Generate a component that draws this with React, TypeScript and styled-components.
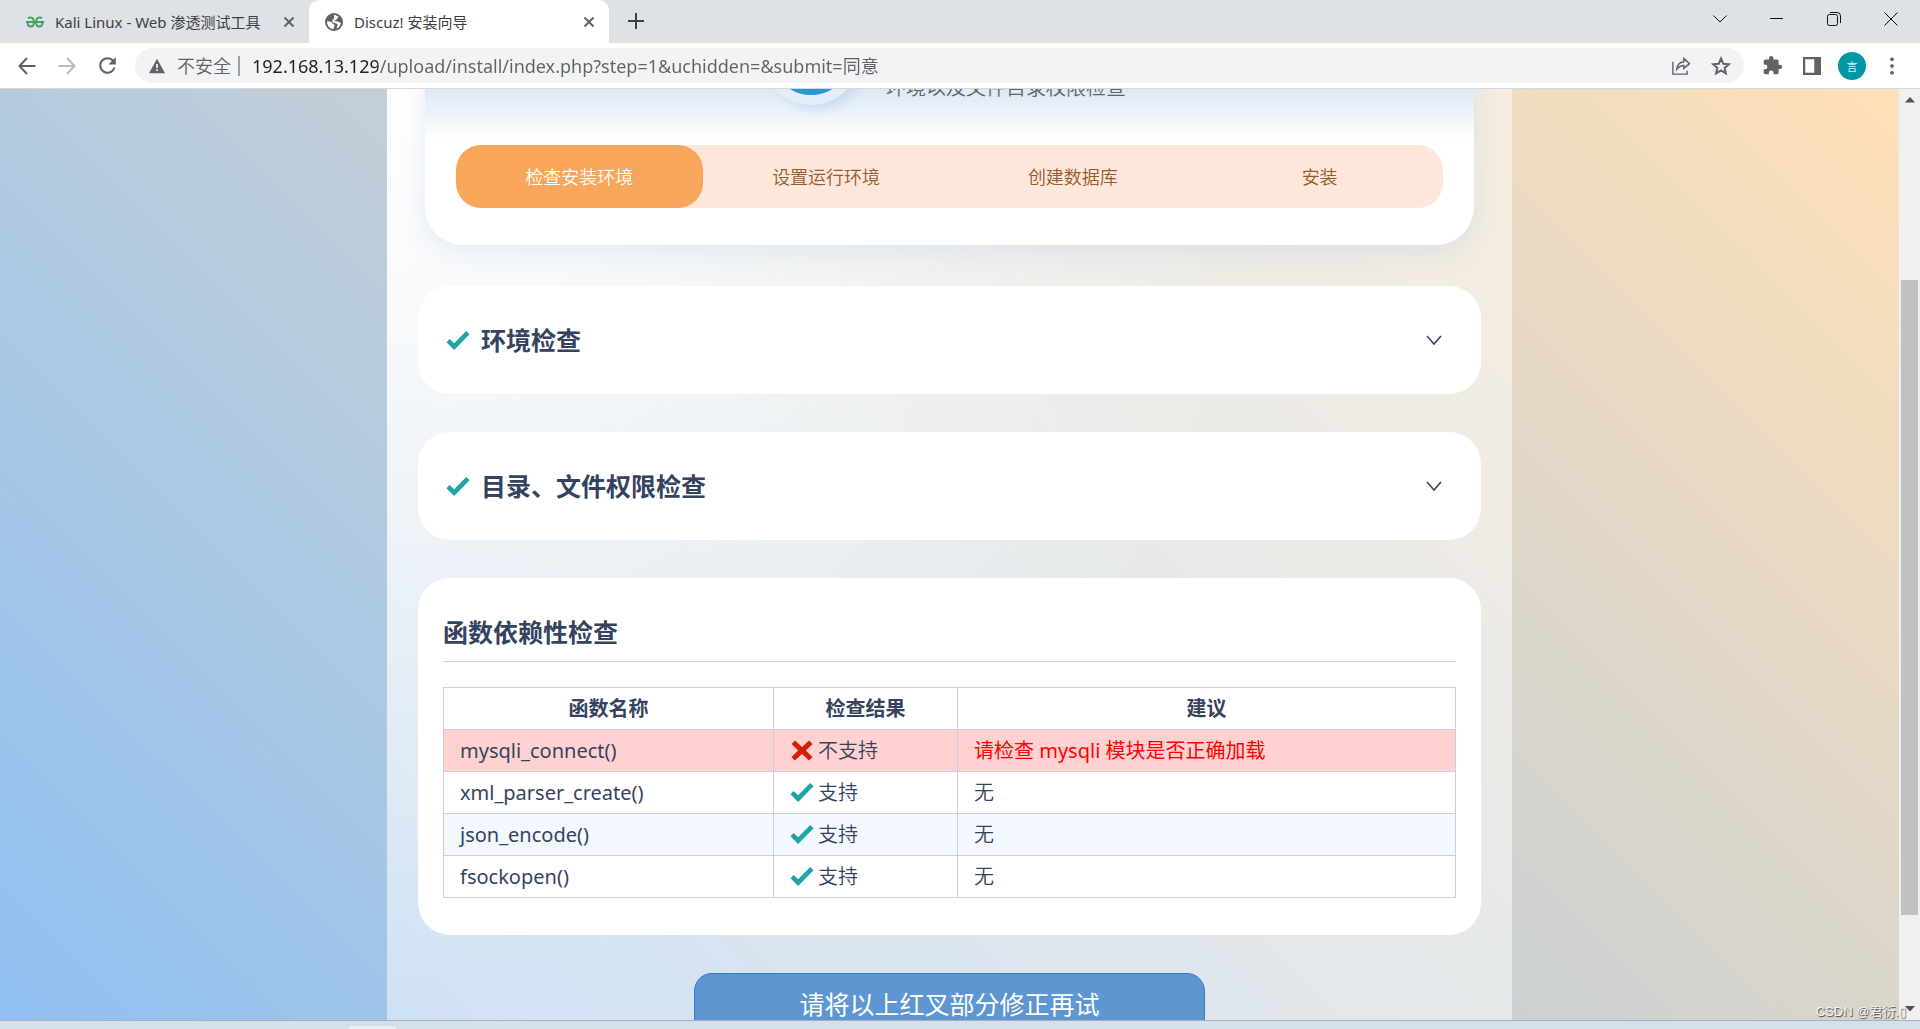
import React, { useState } from "react";
import styled, { createGlobalStyle } from "styled-components";

const GlobalStyle = createGlobalStyle`
  *, *::before, *::after { box-sizing: border-box; }
  body {
    margin: 0;
    overflow: hidden;
    font-family: "Noto Sans", "Noto Sans CJK SC", sans-serif;
    color: #35435f;
  }
  button, input { font: inherit; color: inherit; }
  button { border: 0; padding: 0; background: none; cursor: pointer; }
  svg { display: block; flex: none; }
`;

/* ---------- browser frame ---------- */

const Window = styled.div`
  display: flex;
  flex-direction: column;
  height: 100vh;
  background: #fff;
`;

const TabStrip = styled.header`
  display: flex;
  flex: none;
  height: 43px;
  background: #dee1e6;
`;

const Tab = styled.div<{ $active?: boolean }>`
  display: flex;
  align-items: center;
  gap: 11px;
  width: ${(p) => (p.$active ? 300 : 309)}px;
  padding: 0 14px 0 ${(p) => (p.$active ? 16 : 26)}px;
  background: ${(p) => (p.$active ? "#fff" : "transparent")};
  border-radius: 10px 10px 0 0;
  color: #3c4043;
`;

const TabTitle = styled.span`
  flex: 1;
  min-width: 0;
  overflow: hidden;
  white-space: nowrap;
  font-size: 15px;
  line-height: 20px;
`;

const IconButton = styled.button<{ $size?: number }>`
  display: flex;
  flex: none;
  align-items: center;
  justify-content: center;
  width: ${(p) => p.$size ?? 40}px;
  height: ${(p) => p.$size ?? 40}px;
  color: #5f6368;
  &:disabled { color: #babcbe; }
`;

const NewTab = styled(IconButton)`
  width: 54px;
  height: 42px;
  color: #3c4043;
`;

const WindowControls = styled.div`
  display: flex;
  margin-left: auto;
  padding-right: 1px;
`;

const ControlButton = styled(IconButton)`
  width: 57px;
  height: 37px;
  color: #111;
`;

const Toolbar = styled.div`
  display: flex;
  flex: none;
  align-items: center;
  height: 46px;
  padding: 0 8px 0 7px;
  border-bottom: 1px solid #d5d8dc;
`;

const AddressBar = styled.div`
  display: flex;
  flex: 1;
  align-items: center;
  height: 35px;
  margin: 0 8px;
  padding: 0 3px 0 14px;
  border-radius: 18px;
  background: #f1f3f4;
  color: #5f6368;
`;

const Insecure = styled.label`
  padding: 0 7px 0 12px;
  font-size: 18px;
  line-height: 20px;
  font-weight: 350;
  border-right: 2px solid #9aa0a6;
`;

const Url = styled.input`
  flex: 1;
  min-width: 0;
  border: 0;
  outline: 0;
  padding: 0 0 2px 12px;
  font-size: 18px;
  color: transparent;
  background: linear-gradient(to right, #202124 138px, #5f6368 138px);
  background-clip: text;
  -webkit-background-clip: text;
`;

const Avatar = styled.span`
  display: flex;
  align-items: center;
  justify-content: center;
  width: 28px;
  height: 28px;
  border-radius: 50%;
  background: #0097a7;
  color: #d5f2f4;
  font-size: 11px;
`;

const Viewport = styled.div`
  display: flex;
  flex: 1;
  min-height: 0;
  overflow: hidden;
`;

const ScrollTrack = styled.div`
  display: flex;
  flex: none;
  flex-direction: column;
  align-items: center;
  justify-content: space-between;
  width: 21px;
  padding: 8px 0;
  background: #f0f0f0;
`;

const ScrollThumb = styled.div`
  width: 17px;
  height: 69.4%;
  margin-top: 86px;
  background: #c1c1c1;
`;

const Taskbar = styled.footer`
  flex: none;
  height: 9px;
  padding: 5px 0 0 349px;
  border-top: 1px solid #a7b0ba;
  background: #d4e1ec;
`;

const TaskbarItem = styled.div`
  width: 47px;
  height: 3px;
  border-radius: 3px 3px 0 0;
  background: #e8eff5;
`;

const Watermark = styled.div`
  position: absolute;
  right: 14px;
  bottom: 9px;
  font-family: "Liberation Sans", "Noto Sans CJK SC", sans-serif;
  font-size: 13px;
  line-height: 16px;
  color: #f4f4f4;
  text-shadow: 1px 1px 1px #444;
`;

/* ---------- installer page ---------- */

const Page = styled.main`
  flex: 1;
  min-width: 0;
  overflow: hidden;
  background: linear-gradient(45deg, #8fc0f2, #ffe0b8);
`;

const Container = styled.div`
  display: flex;
  flex-direction: column;
  gap: 38px;
  max-width: 1125px;
  min-height: 100%;
  margin: 0 auto;
  padding: 0 31px;
  background:
    radial-gradient(circle at 0 0, #fff, rgba(255, 255, 255, 0.7) 300px, rgba(255, 255, 255, 0) 900px),
    rgba(255, 255, 255, 0.5);
`;

const Banner = styled.section`
  margin: -94px 7px 3px;
  padding: 0 31px 37px;
  border-radius: 0 0 38px 38px;
  background: linear-gradient(#d9e6f5 60px, #e1ebf7 100px, #fff 146px);
  box-shadow: 0 6px 28px rgba(120, 165, 220, 0.18);
`;

const BannerHead = styled.div`
  display: flex;
  align-items: center;
  justify-content: center;
  gap: 25px;
  height: 150px;
  padding-right: 12px;
`;

const BannerLogo = styled.div`
  width: 100px;
  height: 100px;
  margin-top: -30px;
  border: 10px solid #e4edf8;
  border-radius: 50%;
  background: #2b96d1;
  box-shadow: 6px 3px 12px #c3d8f1;
`;

const BannerText = styled.p`
  margin: 36px 0 0;
  font-size: 20px;
  line-height: 28px;
  font-weight: 350;
  color: #5f636b;
`;

const Steps = styled.ol`
  display: grid;
  grid-template-columns: repeat(4, 1fr);
  margin: 0;
  padding: 0;
  border-radius: 25px;
  background: #ffe6db;
  list-style: none;
`;

const Step = styled.li<{ $active?: boolean }>`
  padding: 19px 0 17px;
  border-radius: 25px;
  background: ${(p) => (p.$active ? "#f7a65b" : "transparent")};
  color: ${(p) => (p.$active ? "#fff" : "#935c2b")};
  font-size: 18px;
  line-height: 27px;
  font-weight: 350;
  text-align: center;
`;

const Card = styled.section`
  border-radius: 32px;
  background: #fff;
`;

const CardToggle = styled.button`
  display: flex;
  align-items: center;
  gap: 11px;
  width: 100%;
  padding: 38px 39px 38px 28px;
  text-align: left;
`;

const CardTitle = styled.span`
  flex: 1;
  font-size: 25px;
  line-height: 32px;
  font-weight: 700;
`;

const TableCard = styled(Card)`
  padding: 38px 25px 37px;
`;

const Heading = styled.h2`
  margin: 0 0 25px;
  padding-bottom: 13px;
  border-bottom: 1px solid #c5d0e4;
  font-size: 25px;
  line-height: 32px;
`;

const Table = styled.table`
  width: 100%;
  border-collapse: collapse;
  table-layout: fixed;
  font-size: 20px;
  line-height: 29px;
`;

const Head = styled.th<{ $width?: string }>`
  width: ${(p) => p.$width ?? "auto"};
  padding: 6px 16px;
  border: 1px solid #c5d0e4;
`;

const Cell = styled.td<{ $light?: boolean }>`
  padding: 6px 16px;
  border: 1px solid #c5d0e4;
  font-weight: ${(p) => (p.$light ? 350 : 400)};
`;

const Row = styled.tr<{ $failed?: boolean }>`
  background: ${(p) => (p.$failed ? "#ffd1d1" : "#fff")};
  &:nth-child(3) { background: #f2f8fd; }
  ${Cell}:last-child { color: ${(p) => (p.$failed ? "#f00" : "inherit")}; }
`;

const Result = styled.span`
  display: flex;
  align-items: center;
  gap: 4px;
`;

const Submit = styled.button`
  align-self: center;
  width: 511px;
  max-width: 100%;
  flex: none;
  padding: 14px;
  border: 1px solid #2f7acb;
  border-radius: 18px;
  background: #5e96d2;
  color: #fff;
  font-size: 25px;
  line-height: 32px;
`;

/* ---------- icons ---------- */

const Check = () => (
  <svg width="24" height="19" viewBox="0 0 24 19" fill="#1fa3a6" aria-hidden>
    <path d="M.5 11.2 3.6 8 8.2 12.3 20.2 0 23.6 3.3 8.1 19Z" />
  </svg>
);

const Cross = () => (
  <svg width="24" height="21" viewBox="0 0 24 21" fill="#d81e06" aria-hidden>
    <path d="M1.5 4 5 .5 12 7 19 .5 22.5 4 15.8 10.5 22.5 17 19 20.5 12 14 5 20.5 1.5 17 8.2 10.5Z" />
  </svg>
);

const Line = ({ size, d, width = 2, box = 24 }: { size: number; d: string; width?: number; box?: number }) => (
  <svg width={size} height={size} viewBox={`0 0 ${box} ${box}`} fill="none" stroke="currentColor" strokeWidth={width} aria-hidden>
    <path d={d} />
  </svg>
);

const Solid = ({ size, d }: { size: number; d: string }) => (
  <svg width={size} height={size} viewBox="0 0 24 24" fill="currentColor" aria-hidden>
    <path d={d} />
  </svg>
);

const CloseMark = () => <Line size={12} box={12} width={2} d="M1.5 1.5 10.5 10.5M10.5 1.5 1.5 10.5" />;

const KaliIcon = () => (
  <svg width="18" height="12" viewBox="0 0 18 12" fill="none" stroke="#45a163" strokeWidth="2" aria-hidden>
    <path d="M0 6H18M2 2.2C5 .5 8 2 8 6 8 9 6.500 10.500 4.800 10.500 2.500 10.500 1.500 8.500 1.500 6M16 2.200C13 .5 10 2 10 6 10 9 11.500 10.500 13.200 10.500 15.500 10.500 16.500 8.500 16.500 6" />
  </svg>
);

const GlobeIcon = () => (
  <svg width="18" height="18" viewBox="0 0 18 18" aria-hidden>
    <circle cx="9" cy="9" r="9" fill="#5f6368" />
    <path d="M2 8.500C4.500 8 6.500 9 7.500 10.500 8.500 11 9.500 11 9.500 12.500L8.500 16C5 16 2 13 2 8.500ZM9 1.800 13.500 3.500C13.500 5 12 5 11.500 6.500 11 8 9 7 8.500 8L13 8.500C14 9 15 10 16 9.500 15.500 13 13.500 15 11.500 15.600L12.500 12C12.500 10.500 10 10.500 8 9.500 6.500 8.500 7 6.500 9 6Z" fill="#fff" />
  </svg>
);

const Triangle = ({ down }: { down?: boolean }) => (
  <svg width="10" height="6" viewBox="0 0 10 6" fill="#505050" aria-hidden>
    <path d={down ? "M0 0H10L5 5.500Z" : "M0 5.500H10L5 0Z"} />
  </svg>
);

const CHEVRON = "M1 4 8 12 15 4";

const rows = [
  { name: "mysqli_connect()", ok: false, advice: "请检查 mysqli 模块是否正确加载" },
  { name: "xml_parser_create()", ok: true, advice: "无" },
  { name: "json_encode()", ok: true, advice: "无" },
  { name: "fsockopen()", ok: true, advice: "无" },
];

const steps = ["检查安装环境", "设置运行环境", "创建数据库", "安装"];

export default function App() {
  const [url, setUrl] = useState("192.168.13.129/upload/install/index.php?step=1&uchidden=&submit=同意");

  return (
    <Window>
      <GlobalStyle />
      <TabStrip>
        <Tab>
          <KaliIcon />
          <TabTitle>Kali Linux - Web 渗透测试工具</TabTitle>
          <IconButton $size={12} aria-label="关闭标签页"><CloseMark /></IconButton>
        </Tab>
        <Tab $active>
          <GlobeIcon />
          <TabTitle>Discuz! 安装向导</TabTitle>
          <IconButton $size={12} aria-label="关闭标签页"><CloseMark /></IconButton>
        </Tab>
        <NewTab aria-label="新标签页"><Line size={16} box={16} d="M8 0V16M0 8H16" /></NewTab>
        <WindowControls>
          <ControlButton aria-label="搜索标签页"><Line size={16} box={16} width={1} d="M1.500 4.500 8 11 14.500 4.500" /></ControlButton>
          <ControlButton aria-label="最小化"><Line size={13} box={13} width={1} d="M0 6.500H13" /></ControlButton>
          <ControlButton aria-label="还原">
            <Line size={14} box={14} width={1} d="M2.500 2.500H8.500Q10.500 2.500 10.500 4.500V11.500Q10.500 13.500 8.500 13.500H2.500Q.5 13.500 .5 11.500V4.500Q.5 2.500 2.500 2.500ZM3 .5H10Q13.500 .5 13.500 4V11" />
          </ControlButton>
          <ControlButton aria-label="关闭"><Line size={14} box={14} width={1} d="M.5.5 13.500 13.500M13.500.5.5 13.500" /></ControlButton>
        </WindowControls>
      </TabStrip>

      <Toolbar>
        <IconButton aria-label="后退"><Line size={24} d="M20.500 12H5M12 4 4.500 12 12 20" /></IconButton>
        <IconButton aria-label="前进" disabled><Line size={24} d="M3.500 12H19M12 4 19.500 12 12 20" /></IconButton>
        <IconButton aria-label="重新加载">
          <Solid size={25} d="M17.650 6.350A7.960 7.960 0 0 0 12 4a8 8 0 1 0 7.730 10h-2.080A6 6 0 1 1 12 6c1.660 0 3.140.690 4.220 1.780L13 11h7V4z" />
        </IconButton>
        <AddressBar>
          <Solid size={16} d="M12 1 0 23H24ZM13.300 19.500H10.700V16.800H13.300ZM13.300 15H10.700V9H13.300Z" />
          <Insecure htmlFor="address">不安全</Insecure>
          <Url id="address" value={url} onChange={(e) => setUrl(e.target.value)} />
          <IconButton aria-label="分享">
            <Line size={20} box={21} width={1.5} d="M2 6V19H17V15.500M6 14C6.500 9 9 6.500 13.500 6V2.500L19.500 8 13.500 13V10C10 10 8 11.500 6 14Z" />
          </IconButton>
          <IconButton aria-label="收藏">
            <Line size={20} box={20} width={2} d="M10 2.500 12.200 7.700 17.900 8.200 13.600 11.900 14.900 17.400 10 14.500 5.100 17.400 6.400 11.900 2.100 8.200 7.800 7.700Z" />
          </IconButton>
        </AddressBar>
        <IconButton aria-label="扩展程序">
          <Solid size={21} d="M20.500 11H19V7c0-1.100-.9-2-2-2h-4V3.500a2.500 2.500 0 0 0-5 0V5H4c-1.100 0-2 .9-2 2v3.800h1.500a2.700 2.700 0 0 1 0 5.400H2V20c0 1.100.9 2 2 2h3.800v-1.500a2.700 2.700 0 0 1 5.400 0V22H17c1.100 0 2-.9 2-2v-4h1.500a2.500 2.500 0 0 0 0-5z" />
        </IconButton>
        <IconButton aria-label="侧边栏">
          <Solid size={18} d="M0 0H24V24H0ZM3 3V21H15V3Z" />
        </IconButton>
        <IconButton aria-label="用户"><Avatar>言</Avatar></IconButton>
        <IconButton aria-label="菜单">
          <Solid size={18} d="M12 .5a2.500 2.500 0 1 0 .01 0ZM12 9.500a2.500 2.500 0 1 0 .01 0ZM12 18.500a2.500 2.500 0 1 0 .01 0Z" />
        </IconButton>
      </Toolbar>

      <Viewport>
        <Page>
          <Container>
            <Banner>
              <BannerHead>
                <BannerLogo />
                <BannerText>环境以及文件目录权限检查</BannerText>
              </BannerHead>
              <Steps>
                {steps.map((label, i) => (
                  <Step key={label} $active={i === 0}>{label}</Step>
                ))}
              </Steps>
            </Banner>

            {["环境检查", "目录、文件权限检查"].map((title) => (
              <Card key={title}>
                <CardToggle aria-expanded={false}>
                  <Check />
                  <CardTitle>{title}</CardTitle>
                  <Line size={16} box={16} width={1.5} d={CHEVRON} />
                </CardToggle>
              </Card>
            ))}

            <TableCard>
              <Heading>函数依赖性检查</Heading>
              <Table>
                <thead>
                  <tr>
                    <Head $width="330px">函数名称</Head>
                    <Head $width="184px">检查结果</Head>
                    <Head>建议</Head>
                  </tr>
                </thead>
                <tbody>
                  {rows.map((row) => (
                    <Row key={row.name} $failed={!row.ok}>
                      <Cell>{row.name}</Cell>
                      <Cell $light>
                        <Result>
                          {row.ok ? <Check /> : <Cross />}
                          {row.ok ? "支持" : "不支持"}
                        </Result>
                      </Cell>
                      <Cell $light={row.ok}>{row.advice}</Cell>
                    </Row>
                  ))}
                </tbody>
              </Table>
            </TableCard>

            <Submit>请将以上红叉部分修正再试</Submit>
          </Container>
        </Page>
        <ScrollTrack>
          <Triangle />
          <ScrollThumb />
          <Triangle down />
        </ScrollTrack>
      </Viewport>

      <Taskbar><TaskbarItem /></Taskbar>
      <Watermark>CSDN @君衍.▯</Watermark>
    </Window>
  );
}
